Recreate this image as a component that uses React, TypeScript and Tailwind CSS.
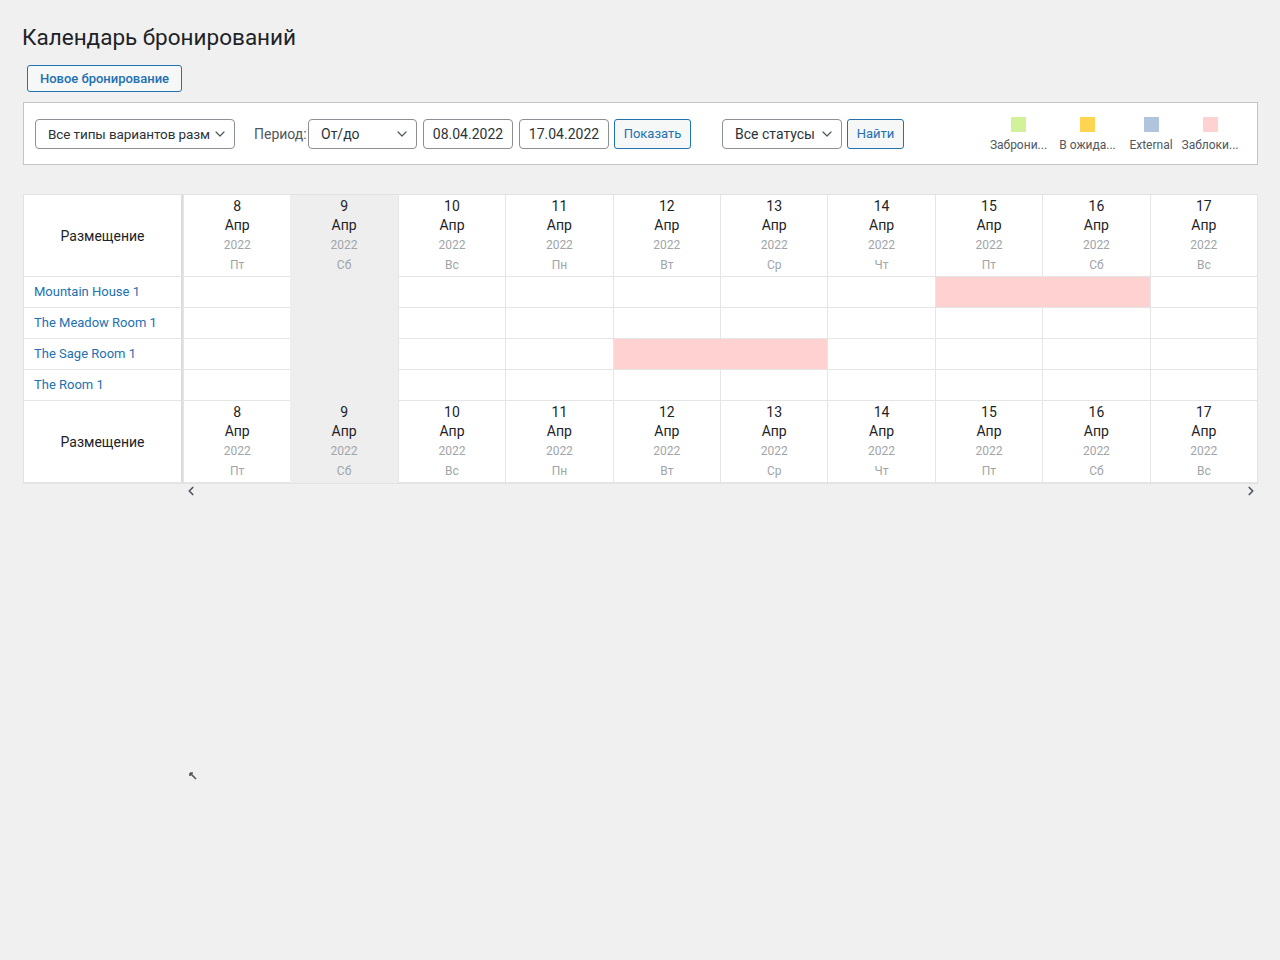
import { ChevronDown, ChevronLeft, ChevronRight } from "lucide-react";

const days = [
  { d: 8, w: "Пт" },
  { d: 9, w: "Сб", today: true },
  { d: 10, w: "Вс" },
  { d: 11, w: "Пн" },
  { d: 12, w: "Вт" },
  { d: 13, w: "Ср" },
  { d: 14, w: "Чт" },
  { d: 15, w: "Пт" },
  { d: 16, w: "Сб" },
  { d: 17, w: "Вс" },
];

const rooms = [
  { name: "Mountain House 1", blocked: [15, 16] },
  { name: "The Meadow Room 1", blocked: [] as number[] },
  { name: "The Sage Room 1", blocked: [12, 13] },
  { name: "The Room 1", blocked: [] as number[] },
];

const legend = [
  { label: "Заброни...", color: "bg-[#d1f19a]", w: "w-[69px]" },
  { label: "В ожида...", color: "bg-[#ffd450]", w: "w-[69px]" },
  { label: "External", color: "bg-[#b0c4de]", w: "w-[58px]" },
  { label: "Заблоки...", color: "bg-[#ffd2d2]", w: "w-[60px]" },
];

function Select({ label, w, small }: { label: string; w: string; small?: boolean }) {
  return (
    <div
      className={`${w} h-[30px] flex items-center justify-between border border-[#8c8f94] rounded-[4px] bg-white pl-3 pr-[6px] ${small ? "text-[13.5px] tracking-[-0.1px]" : "text-[14px]"} text-[#2c3338]`}
    >
      <span className="whitespace-nowrap pt-[1px]">{label}</span>
      <ChevronDown size={16} strokeWidth={1.8} className="shrink-0 text-[#50575e]" />
    </div>
  );
}

function HeaderRow() {
  return (
    <>
      <div className="h-[82px] bg-white flex items-center justify-center pt-[2px] text-[14px] text-[#1d2327] border-r-2 border-[#dcdcde] border-b border-b-[#e5e5e5]">
        Размещение
      </div>
      {days.map((day) => (
        <div
          key={day.d}
          className={`h-[82px] ${day.today ? "bg-[#eeeeee] border-b border-[#eeeeee]" : "bg-white border-l border-b border-[#e5e5e5]"} flex flex-col items-center pt-[1px] leading-5`}
        >
          <span className="text-[14px] text-[#1d2327]">{day.d}</span>
          <span className="text-[14px] text-[#1d2327] -mt-[1px]">Апр</span>
          <span className="text-[12px] text-[#a0a5aa]">2022</span>
          <span className="text-[12px] text-[#a0a5aa]">{day.w}</span>
        </div>
      ))}
    </>
  );
}

export default function App() {
  return (
    <div className="min-h-[960px] bg-[#f0f0f1] font-['Roboto',sans-serif] pl-[23px] pr-[22px] pt-[23px] relative">
      <h1 className="text-[22.5px] leading-[29px] text-[#1d2327] -ml-[1px]">Календарь бронирований</h1>
      <button className="mt-[13px] ml-[4px] w-[155px] h-[27px] border border-[#2271b1] rounded-[3px] bg-[#f6f7f7] text-[#2271b1] text-[13px] font-medium">
        Новое бронирование
      </button>

      <div className="mt-[10px] h-[63px] bg-white border border-[#c3c4c7] flex items-center pl-[11px]">
        <Select label="Все типы вариантов разм" w="w-[200px]" small />
        <span className="ml-[19px] w-[54px] pt-[1px] text-[14px] text-[#50575e]">Период:</span>
        <Select label="От/до" w="w-[109px]" />
        <div className="ml-[6px] w-[90px] h-[30px] flex items-center justify-center pt-[1px] border border-[#8c8f94] rounded-[4px] text-[14px] text-[#2c3338]">
          08.04.2022
        </div>
        <div className="ml-[6px] w-[90px] h-[30px] flex items-center justify-center pt-[1px] border border-[#8c8f94] rounded-[4px] text-[14px] text-[#2c3338]">
          17.04.2022
        </div>
        <button className="ml-[5px] w-[77px] h-[30px] pt-[1px] border border-[#2271b1] rounded-[3px] bg-[#f6f7f7] text-[#2271b1] text-[13px]">
          Показать
        </button>
        <div className="ml-[31px]">
          <Select label="Все статусы" w="w-[120px]" />
        </div>
        <button className="ml-[5px] w-[57px] h-[30px] pt-[1px] border border-[#2271b1] rounded-[3px] bg-[#f6f7f7] text-[#2271b1] text-[13px]">
          Найти
        </button>
        <div className="ml-auto mr-[17px] flex items-start mt-[3px]">
          {legend.map((l) => (
            <div key={l.label} className={`${l.w} flex flex-col items-center`}>
              <div className={`w-[15px] h-[15px] ${l.color}`} />
              <span className="mt-[5px] text-[12px] leading-4 text-[#50575e] whitespace-nowrap">{l.label}</span>
            </div>
          ))}
        </div>
      </div>

      <div className="mt-[29px] border border-[#e2e2e2] grid grid-cols-[159px_repeat(10,1fr)] bg-white">
        <HeaderRow />
        {rooms.map((room) => (
          <div key={room.name} className="contents">
            <div className="bg-white h-[31px] flex items-center pl-[10px] text-[13px] text-[#2271b1] border-r-2 border-[#dcdcde] border-b border-b-[#e5e5e5]">
              {room.name}
            </div>
            {days.map((day) => {
              const blocked = room.blocked.includes(day.d);
              const prevBlocked = room.blocked.includes(day.d - 1);
              return (
                <div
                  key={day.d}
                  className={`h-[31px] ${
                    day.today
                      ? "bg-[#eeeeee] border-b border-[#eeeeee]"
                      : blocked
                        ? `bg-[#ffd1d1] border-b border-[#e5e5e5] ${prevBlocked ? "" : "border-l"}`
                        : "bg-white border-l border-b border-[#e5e5e5]"
                  }`}
                />
              );
            })}
          </div>
        ))}
        <HeaderRow />
      </div>

      <div className="flex justify-between pl-[161px] text-[#50575e]">
        <ChevronLeft size={14} strokeWidth={3} />
        <ChevronRight size={14} strokeWidth={3} />
      </div>

      <svg className="absolute left-[189px] top-[772px]" width="8" height="8" viewBox="0 0 8 8">
        <path d="M1 1 L7 7 M1 1 L1 4 M1 1 L4 1" stroke="#50575e" strokeWidth="1.6" fill="none" />
      </svg>
    </div>
  );
}
